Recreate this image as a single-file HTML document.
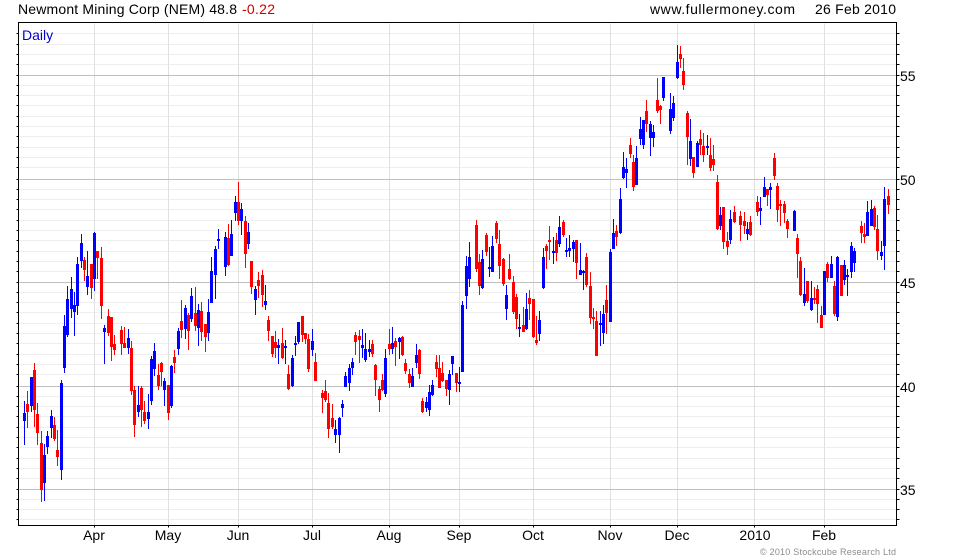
<!DOCTYPE html>
<html><head><meta charset="utf-8"><style>
html,body{margin:0;padding:0;background:#fff}
svg{display:block}
text{font-family:"Liberation Sans",Arial,sans-serif;font-size:14px;fill:#000}
</style></head><body>
<svg width="980" height="560" viewBox="0 0 980 560" xmlns="http://www.w3.org/2000/svg">
<g shape-rendering="crispEdges" fill="none" transform="translate(.5,.5)">
<path stroke="#eeeeee" d="M19 33H896M19 44H896M19 54H896M19 64H896M19 85H896M19 95H896M19 105H896M19 116H896M19 126H896M19 136H896M19 147H896M19 157H896M19 167H896M19 189H896M19 199H896M19 209H896M19 220H896M19 230H896M19 240H896M19 251H896M19 261H896M19 271H896M19 292H896M19 302H896M19 312H896M19 323H896M19 333H896M19 343H896M19 354H896M19 364H896M19 374H896M19 396H896M19 406H896M19 416H896M19 427H896M19 437H896M19 447H896M19 458H896M19 468H896M19 478H896M19 499H896M19 509H896M19 519H896"/>
<path stroke="#e0e0e0" d="M94 23V525M168 23V525M238 23V525M312 23V525M389 23V525M459 23V525M533 23V525M610 23V525M677 23V525M754 23V525M824 23V525"/>
<path stroke="#c0c0c0" d="M19 75H896M19 179H896M19 282H896M19 386H896M19 489H896"/>
<path stroke="#000" d="M18 22H896V525H18ZM16 33h2M16 44h2M16 54h2M16 64h2M16 75h2M16 85h2M16 95h2M16 105h2M16 116h2M16 126h2M16 136h2M16 147h2M16 157h2M16 167h2M16 179h2M16 189h2M16 199h2M16 209h2M16 220h2M16 230h2M16 240h2M16 251h2M16 261h2M16 271h2M16 282h2M16 292h2M16 302h2M16 312h2M16 323h2M16 333h2M16 343h2M16 354h2M16 364h2M16 374h2M16 386h2M16 396h2M16 406h2M16 416h2M16 427h2M16 437h2M16 447h2M16 458h2M16 468h2M16 478h2M16 489h2M16 499h2M16 509h2M16 519h2M896 33h3M896 44h3M896 54h3M896 64h3M896 75h3M896 85h3M896 95h3M896 105h3M896 116h3M896 126h3M896 136h3M896 147h3M896 157h3M896 167h3M896 179h3M896 189h3M896 199h3M896 209h3M896 220h3M896 230h3M896 240h3M896 251h3M896 261h3M896 271h3M896 282h3M896 292h3M896 302h3M896 312h3M896 323h3M896 333h3M896 343h3M896 354h3M896 364h3M896 374h3M896 386h3M896 396h3M896 406h3M896 416h3M896 427h3M896 437h3M896 447h3M896 458h3M896 468h3M896 478h3M896 489h3M896 499h3M896 509h3M896 519h3M94 525v2M168 525v2M238 525v2M312 525v2M389 525v2M459 525v2M533 525v2M610 525v2M677 525v2M754 525v2M824 525v2"/>
</g>
<g shape-rendering="crispEdges" fill="none" transform="translate(.5,0)">
<path stroke="#0000ff" stroke-width="1" d="M24 401V445M31 377V412M44 444V501M47 431V454M51 410V438M61 380V480M64 315V373M67 286V337M71 277V318M74 292V336M77 257V315M81 234V268M87 251V295M94 232V291M104 325V364M128 329V354M138 386V417M148 394V429M151 356V405M154 343V376M164 378V406M171 365V408M178 328V355M185 305V339M191 288V322M198 304V346M208 299V341M211 257V303M215 246V299M218 229V249M225 232V276M231 220V256M235 196V221M241 203V235M248 223V249M255 286V315M265 285V310M278 339V364M285 340V364M292 355V387M295 336V356M298 322V344M312 329V356M335 420V443M339 417V453M342 400V417M345 372V387M349 364V391M352 358V375M362 329V358M365 333V362M369 340V357M385 349V397M392 327V354M399 337V359M412 368V387M416 344V368M426 397V412M429 385V416M432 380V396M449 370V405M452 356V375M459 367V392M462 301V372M466 256V309M469 242V287M482 250V289M489 247V277M492 236V272M506 285V320M519 314V337M526 293V330M539 311V341M543 248V289M553 237V264M559 216V247M566 238V257M569 235V257M573 240V262M580 243V275M583 270V290M600 311V346M603 305V344M610 249V322M613 219V249M620 188V234M623 152V179M626 158V188M636 146V185M640 117V145M643 120V149M650 121V156M653 125V147M663 77V101M670 93V134M673 96V121M677 45V79M690 119V166M697 141V167M707 135V155M720 207V230M730 210V244M747 222V240M760 197V225M764 177V197M770 183V209M794 210V231M804 268V306M811 281V311M824 271V315M831 256V278M837 256V321M844 260V285M847 269V296M851 242V278M854 248V272M867 201V236M871 200V226M881 241V260M884 187V270"/>
<path stroke="#0000ff" stroke-width="3" d="M24 413V421M31 377V406M44 455V483M47 436V447M51 416V428M61 383V470M64 326V368M67 299V335M71 289V309M74 305V312M77 264V306M81 243V261M87 276V287M94 233V279M104 328V332M128 338V348M138 405V412M148 412V419M151 359V401M154 351V369M164 381V390M171 366V406M178 331V349M185 308V329M191 296V319M198 310V328M208 312V333M211 271V303M215 249V275M218 239V241M225 237V267M231 234V256M235 202V213M241 209V221M248 232V244M255 289V300M265 301V305M278 345V348M285 346V348M292 358V386M295 343V345M298 322V342M312 341V350M335 429V435M339 418V435M342 404V408M345 376V387M349 368V383M352 362V368M362 345V348M365 349V360M369 349V352M385 358V394M392 343V349M399 338V342M412 376V387M416 355V363M426 402V408M429 392V410M432 385V395M449 374V390M452 356V364M459 382V384M462 305V372M466 266V296M469 257V279M482 259V288M489 267V269M492 246V272M506 295V309M519 327V329M526 309V329M539 320V334M543 257V288M553 251V253M559 227V244M566 250V252M569 248V251M573 242V249M580 270V275M583 271V273M600 323V325M603 314V333M610 252V322M613 233V249M620 199V233M623 167V178M626 169V173M636 158V185M640 129V139M643 120V145M650 124V138M653 132V138M663 77V98M670 109V131M673 103V118M677 62V78M690 141V159M697 143V167M707 146V148M720 215V226M730 219V240M747 229V234M760 208V211M764 187V197M770 187V190M794 211V231M804 294V303M811 298V310M824 271V315M831 264V278M837 257V317M844 265V280M847 275V277M851 246V272M854 251V263M867 212V236M871 209V226M881 252V256M884 199V246"/>
<path stroke="#ff0000" stroke-width="1" d="M27 391V428M34 363V427M37 403V445M41 431V502M54 417V441M57 430V466M84 257V281M91 264V299M97 251V279M101 247V319M108 309V336M111 317V361M114 335V355M121 326V355M124 327V348M131 341V395M134 386V437M141 386V427M144 401V424M158 364V390M161 362V386M168 385V420M174 350V373M181 300V338M188 313V350M195 287V331M201 302V341M205 324V352M228 224V266M238 182V225M245 216V268M251 261V294M258 272V298M262 270V307M268 316V341M272 336V357M275 331V358M282 328V359M288 365V390M302 316V342M305 333V344M308 334V372M315 353V381M322 390V413M325 380V402M328 393V438M332 404V429M355 332V355M359 330V363M372 340V357M375 364V396M379 386V412M382 374V391M389 329V355M395 338V366M402 336V356M405 359V374M409 369V388M419 349V379M422 398V413M436 355V377M439 355V388M442 362V382M446 380V396M456 373V392M476 220V272M479 254V295M486 233V256M496 221V243M499 230V279M503 258V286M509 254V280M513 276V314M516 294V329M523 307V332M529 290V320M533 299V338M536 316V345M546 244V269M549 226V260M556 233V261M563 220V237M576 240V279M586 253V287M590 272V324M593 308V329M596 311V356M606 285V334M616 225V246M630 138V158M633 155V191M646 100V132M657 78V113M660 105V124M680 46V68M683 58V90M687 111V165M693 157V178M700 130V155M703 133V162M710 138V171M713 145V171M717 175V230M723 207V249M727 232V255M734 206V223M740 211V241M744 212V234M750 216V236M757 196V216M767 189V206M774 153V180M777 183V222M780 200V226M784 201V223M787 219V238M797 234V278M800 257V296M807 281V303M814 287V304M817 285V323M821 306V328M827 262V282M834 281V316M841 265V296M861 221V243M864 223V243M874 206V230M877 215V260M888 189V214"/>
<path stroke="#ff0000" stroke-width="3" d="M27 404V412M34 370V410M37 414V433M41 443V490M54 425V439M57 450V457M84 260V270M91 264V288M97 251V258M101 258V306M108 316V333M111 317V347M114 344V350M121 330V344M124 343V348M131 348V391M134 390V425M141 388V410M144 412V421M158 375V386M161 363V372M168 385V413M174 357V363M181 321V330M188 315V331M195 313V326M201 311V332M205 324V337M228 238V265M238 202V221M245 221V254M251 261V287M258 280V286M262 275V295M268 320V331M272 336V354M275 342V348M282 343V358M288 374V389M302 316V335M305 333V339M308 339V369M315 362V381M322 393V398M325 391V400M328 403V429M332 418V427M355 335V342M359 336V340M372 344V354M375 365V380M379 389V400M382 380V390M389 344V349M395 341V347M402 337V355M405 363V371M409 374V383M419 350V374M422 401V412M436 362V369M439 368V388M442 373V381M446 380V389M456 373V383M476 225V269M479 262V286M486 235V252M496 223V239M499 244V266M503 259V284M509 269V279M513 282V312M516 297V319M523 325V332M529 298V304M533 299V337M536 340V343M546 246V251M549 240V242M556 240V253M563 222V235M576 240V263M586 257V285M590 286V318M593 317V319M596 321V356M606 300V313M616 231V237M630 145V154M633 162V187M646 111V124M657 100V111M660 106V110M680 54V59M683 71V85M687 113V137M693 157V173M700 139V145M703 146V155M710 155V168M713 159V165M717 182V229M723 207V242M727 241V247M734 212V222M740 216V225M744 221V226M750 222V235M757 202V212M767 189V195M774 158V176M777 186V210M780 204V206M784 204V213M787 221V229M797 238V254M800 261V295M807 281V301M814 298V300M817 289V304M821 315V328M827 264V278M834 286V314M841 265V296M861 226V233M864 234V237M874 208V227M877 229V251M888 196V205"/>
</g>
<text x="18" y="14" textLength="219" lengthAdjust="spacing">Newmont Mining Corp (NEM) 48.8</text>
<text x="242" y="14" textLength="33" lengthAdjust="spacing" style="fill:#cc0000">-0.22</text>
<text x="650" y="14" textLength="145" lengthAdjust="spacing">www.fullermoney.com</text>
<text x="815" y="14" textLength="81" lengthAdjust="spacing">26 Feb 2010</text>
<text x="22" y="40" style="fill:#0000cc">Daily</text>
<text x="900" y="81">55</text>
<text x="900" y="185">50</text>
<text x="900" y="288">45</text>
<text x="900" y="392">40</text>
<text x="900" y="495">35</text>
<g text-anchor="middle">
<text x="94" y="540">Apr</text>
<text x="168" y="540">May</text>
<text x="238" y="540">Jun</text>
<text x="312" y="540">Jul</text>
<text x="389" y="540">Aug</text>
<text x="459" y="540">Sep</text>
<text x="533" y="540">Oct</text>
<text x="610" y="540">Nov</text>
<text x="677" y="540">Dec</text>
<text x="755" y="540">2010</text>
<text x="824" y="540">Feb</text>
</g>
<text x="760" y="555" style="font-size:9px;fill:#8c8c8c" textLength="136" lengthAdjust="spacing">© 2010 Stockcube Research Ltd</text>
</svg>
</body></html>
